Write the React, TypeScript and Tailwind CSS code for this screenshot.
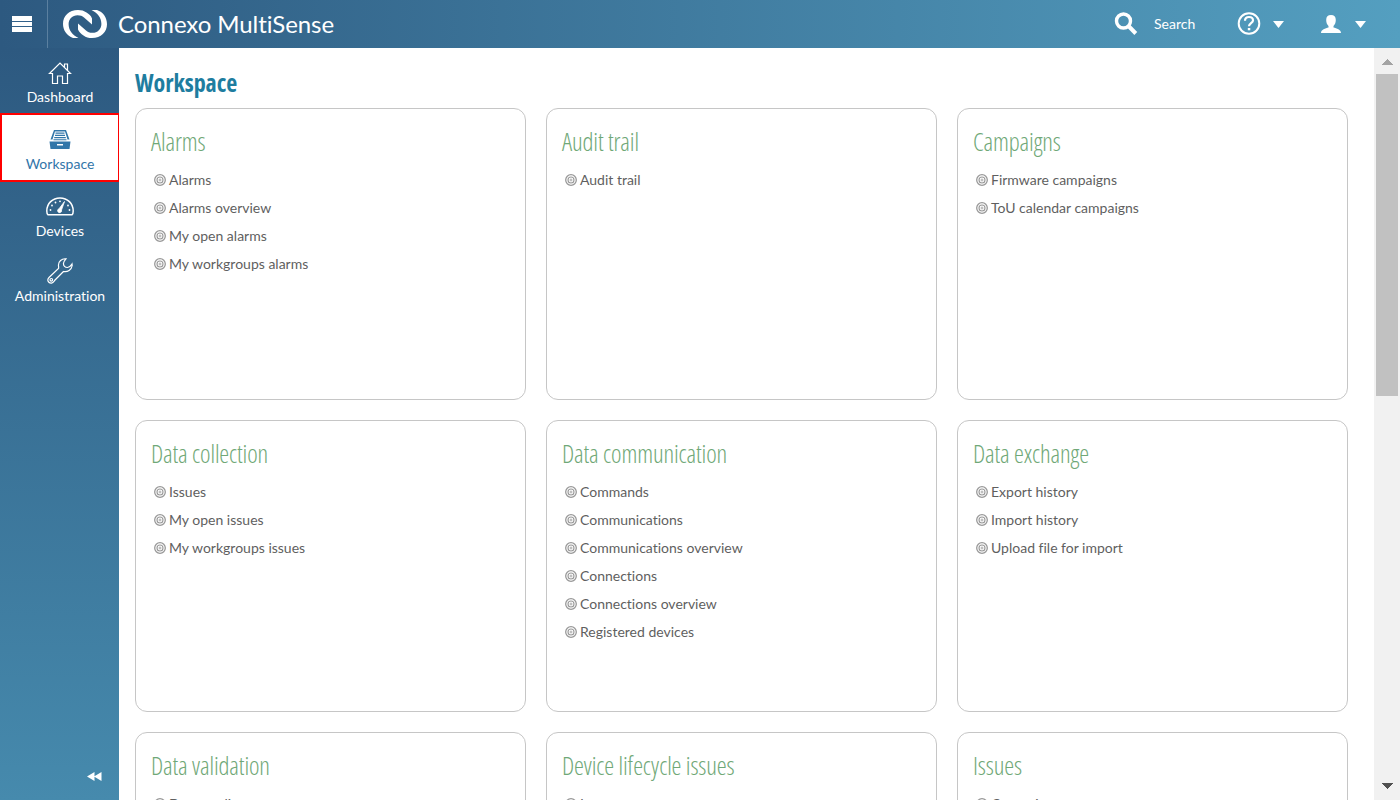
import React from "react";

const cards: { title: string; items: string[] }[] = [
  { title: "Alarms", items: ["Alarms", "Alarms overview", "My open alarms", "My workgroups alarms"] },
  { title: "Audit trail", items: ["Audit trail"] },
  { title: "Campaigns", items: ["Firmware campaigns", "ToU calendar campaigns"] },
  { title: "Data collection", items: ["Issues", "My open issues", "My workgroups issues"] },
  {
    title: "Data communication",
    items: ["Commands", "Communications", "Communications overview", "Connections", "Connections overview", "Registered devices"],
  },
  { title: "Data exchange", items: ["Export history", "Import history", "Upload file for import"] },
  { title: "Data validation", items: ["Data quality"] },
  { title: "Device lifecycle issues", items: ["Issues"] },
  { title: "Issues", items: ["Create issue"] },
];

function Bullet() {
  return (
    <svg width="12" height="12" viewBox="0 0 12 12" fill="none" stroke="#999" className="shrink-0">
      <circle cx="6" cy="6" r="5.3" strokeWidth="1.3" />
      <circle cx="6" cy="6" r="3" strokeWidth="1.1" />
      <circle cx="6" cy="6" r="1" strokeWidth="0.8" />
    </svg>
  );
}

function Card({ title, items }: { title: string; items: string[] }) {
  return (
    <section className="h-[292px] rounded-[12px] border border-[#c6c6c6] bg-white pt-[15px] pl-[15px]">
      <h2 className="h-[36px] whitespace-nowrap font-['Open_Sans',sans-serif] text-[25px] leading-[35px] font-light tracking-[-0.14px] text-[#70a877] [font-stretch:75%]">
        {title}
      </h2>
      <ul className="mt-[6px] pl-[3px]">
        {items.map((item) => (
          <li key={item} className="flex h-[28px] items-center gap-[3px] text-[14px] leading-[28px] text-[#5f5f5f]">
            <Bullet />
            <span>{item}</span>
          </li>
        ))}
      </ul>
    </section>
  );
}

function Caret() {
  return (
    <svg width="11" height="7" viewBox="0 0 11 7" fill="#fff">
      <path d="M0 0h11L5.5 7z" />
    </svg>
  );
}

const logoHook =
  "M29 14.500V8.500C28 6 26 4 23.500 2.600C21 .8 18.500 0 15 0C6 0 0 6 0 13.800C0 20.500 4 26 10 28H15.500C9.500 25 5.600 20.500 5.600 14C5.600 8.800 9.500 5.200 14.500 5.200C17.500 5.200 19.300 6 21 7.500z";

function Header() {
  return (
    <header className="flex h-[48px] shrink-0 items-center bg-[linear-gradient(to_right,#2d5980,#549fc0)] text-white">
      <div className="flex h-full w-[48px] items-center border-r border-[#5b80a0] pl-[12px]">
        <svg width="20" height="16" viewBox="0 0 20 16" fill="#fff">
          <path d="M0 0h20v5H0zM0 6h20v4H0zM0 11h20v5H0z" />
          <path d="M0 5h20v1H0zM0 10h20v1H0z" fill="#31608a" />
        </svg>
      </div>
      <svg width="44" height="28" viewBox="0 0 44 28" fill="#fff" className="ml-[15px]">
        <path d={logoHook} />
        <path d={logoHook} transform="rotate(180 22 14)" />
      </svg>
      <span className="ml-[11px] text-[24px] leading-[48px] tracking-[-0.07px]">Connexo MultiSense</span>
      <div className="ml-auto flex h-full items-center">
        <svg width="24" height="24" viewBox="0 0 24 24" fill="none" stroke="#fff">
          <circle cx="9.500" cy="9" r="7" strokeWidth="3.400" />
          <path d="M14.500 14l7.300 7.500" strokeWidth="4" />
        </svg>
        <span className="ml-[16px] w-[83px] pb-[2px] text-[14px]">Search</span>
        <svg width="24" height="24" viewBox="0 0 24 24" fill="none" stroke="#fff">
          <circle cx="12" cy="11.500" r="10.300" strokeWidth="2" />
          <path d="M8 8.800C8 6.300 9.700 5 12 5s4 1.300 4 3.400c0 2.600-4 3-4 5.800" strokeWidth="2.200" />
          <path d="M10.800 16h2.500v2.300h-2.500z" fill="#fff" stroke="none" />
        </svg>
        <span className="ml-[12px]"><Caret /></span>
        <svg width="20" height="18" viewBox="0 0 20 18" fill="#fff" className="ml-[37px]">
          <path d="M10 0c3.200 0 4.800 1.800 4.800 5 0 2.500-.8 4.700-2.300 6v1.500c3 .9 7.500 2 7.500 5.500H0c0-3.500 4.500-4.600 7.500-5.500V11C6 9.700 5.200 7.500 5.200 5c0-3.200 1.600-5 4.800-5z" />
        </svg>
        <span className="mr-[34px] ml-[14px]"><Caret /></span>
      </div>
    </header>
  );
}

function Sidebar() {
  return (
    <nav className="flex w-[119px] shrink-0 flex-col bg-[linear-gradient(to_bottom,#2d5980,#468aad)] text-center text-[14px] leading-[18px] text-white">
      <div className="flex h-[65px] flex-col items-center pt-[14px]">
        <svg width="24" height="23" viewBox="0 0 24 23" fill="none" stroke="#fff" strokeWidth="1.200">
          <path d="M1.500 11.500L12 1l10.500 10.500H19.500V21.500h-5V14h-5v7.500h-5v-10zM16.500 5V2h3v6.500" />
        </svg>
        <span className="mt-[3px] pl-px">Dashboard</span>
      </div>
      <div className="flex h-[69px] flex-col items-center border-2 border-r-[1px] border-[#fe0000] bg-white pt-[15px] text-[#3276a9]">
        <svg width="22" height="19" viewBox="0 0 22 19" fill="#3276a9">
          <path d="M5 0h12l3.500 9.500h-2L16 1.500H6L3.500 9.500h-2z" />
          <path d="M6.500 2.500h9v1.200h-9zM6 4.800h10V6H6zM5.200 7h11.600v1.300H5.200zM4.500 9.200h13v1.100h-13z" />
          <path fillRule="evenodd" d="M.5 11.500h21L20.500 19h-19zM8 14v1.600h6V14z" />
        </svg>
        <span className="mt-[6px]">Workspace</span>
      </div>
      <div className="flex h-[66px] flex-col items-center pt-[15px]">
        <svg width="28" height="19" viewBox="0 0 28 19" fill="none" stroke="#fff">
          <path d="M2 17.800C1.100 17.300.8 16 .8 14 .8 6.500 6.500.9 14 .9S27.200 6.500 27.200 14c0 2-.3 3.300-1.200 3.800z" strokeWidth="1.500" />
          <path d="M18.500 4.500l-3 8.500a2 2 0 1 1-2.500-1.200z" fill="#fff" strokeWidth="0.8" />
          <g fill="#fff" stroke="none">
            <circle cx="4.500" cy="13" r=".9" />
            <circle cx="6" cy="8.500" r=".9" />
            <circle cx="9.500" cy="5.500" r=".9" />
            <circle cx="14" cy="4.300" r=".9" />
            <circle cx="22" cy="8.500" r=".9" />
            <circle cx="23.500" cy="13" r=".9" />
          </g>
        </svg>
        <span className="mt-[6px] pl-px">Devices</span>
      </div>
      <div className="flex h-[66px] flex-col items-center pt-[10px]">
        <svg width="26" height="26" viewBox="0 0 26 26" fill="none" stroke="#fff" strokeWidth="1.200">
          <path d="M19 .8c-4-.5-8 2.500-7.500 7 .1 1 .3 1.700 0 2.700L2 19.500c-2.500 2.500-.5 6 2.500 5.600 1.700-.3 2.500-1.900 3.500-3.100l8.500-8.500c4 .8 8-1.500 8.700-6l-.2-1.500c-1.200 1.800-2.300 3.500-4.500 3.500-2.500 0-4.200-1.700-4-4.200.1-2 1.300-3 2.500-4.500z" />
          <circle cx="4.300" cy="21.800" r="1.300" />
        </svg>
        <span className="mt-[3px] pl-px">Administration</span>
      </div>
      <div className="mt-auto flex justify-end pr-[17px] pb-[19px]">
        <svg width="15" height="9" viewBox="0 0 15 9" fill="#fff">
          <path d="M0 4.500L7.500 0v9zM7 4.500L14.500 0v9z" />
        </svg>
      </div>
    </nav>
  );
}

export default function App() {
  return (
    <div className="flex h-[800px] w-[1400px] flex-col overflow-hidden bg-white font-['Lato',sans-serif] [font-variant-ligatures:none]">
      <Header />
      <div className="flex min-h-0 flex-1">
        <Sidebar />
        <main className="min-w-0 flex-1 overflow-hidden pl-[16px]">
          <h1 className="h-[60px] pt-[17px] font-['Open_Sans',sans-serif] text-[24px] leading-[36px] font-bold tracking-[-0.06px] text-[#1e7d9f] [font-stretch:75%]">
            Workspace
          </h1>
          <div className="grid grid-cols-[391px_391px_391px] gap-[20px]">
            {cards.map((card) => (
              <Card key={card.title} {...card} />
            ))}
          </div>
        </main>
        <div className="flex w-[26px] shrink-0 flex-col items-center bg-[#f1f1f1] py-[11px]">
          <svg width="12" height="6" viewBox="0 0 12 6" fill="#a3a3a3" shapeRendering="crispEdges">
            <path d="M0 6h12L6 0z" />
          </svg>
          <div className="mt-[9px] h-[322px] w-[22px] bg-[#c1c1c1]" />
          <svg width="12" height="6" viewBox="0 0 12 6" fill="#505050" shapeRendering="crispEdges" className="mt-auto">
            <path d="M0 0h12L6 6z" />
          </svg>
        </div>
      </div>
    </div>
  );
}
